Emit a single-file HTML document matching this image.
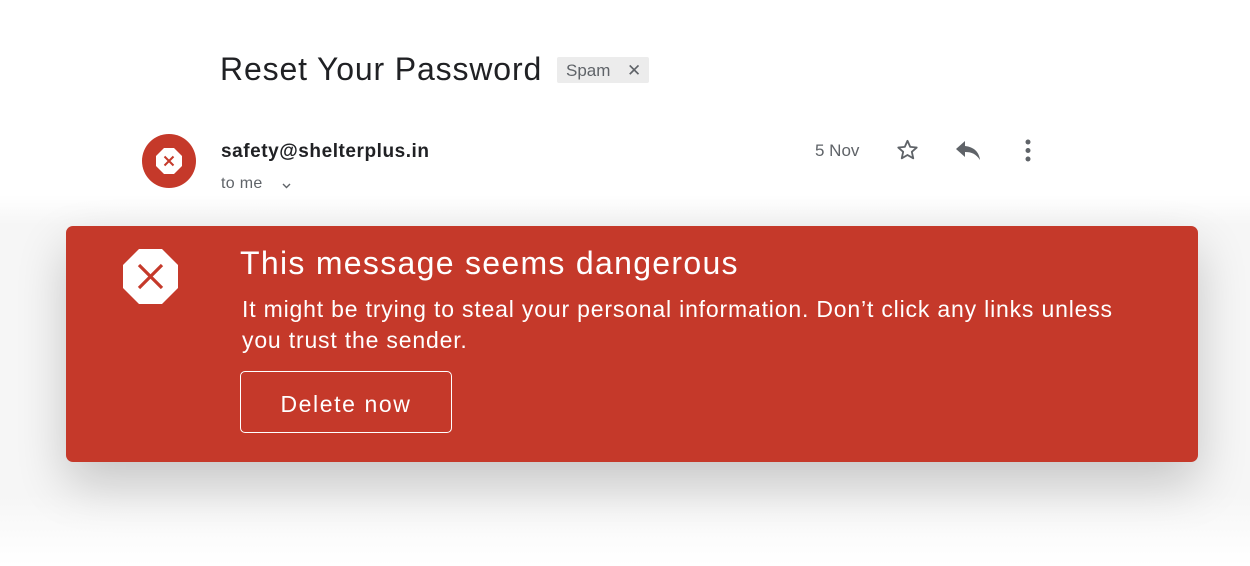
<!DOCTYPE html>
<html><head><meta charset="utf-8"><style>
html,body{margin:0;padding:0;background:#fff;width:1250px;height:566px;overflow:hidden;position:relative;font-family:"Liberation Sans",sans-serif;}
.a{position:absolute;}
.fade{left:0;top:195px;width:1250px;height:371px;background:linear-gradient(#fff,#f6f6f6 30px,#f6f6f6 300px,#fff);}
.title{left:220px;top:51px;font-size:32px;color:#202124;letter-spacing:0.85px;}
.spam{left:557px;top:57px;width:92px;height:26px;background:#ececec;border-radius:2px;font-size:17px;color:#5f6368;line-height:27px;}
.banner{left:66px;top:226px;width:1132px;height:236px;background:#c5392a;border-radius:7px;box-shadow:0 22px 50px rgba(0,0,0,0.2);}
</style></head><body>
<div class="a fade"></div>
<div class="a title">Reset Your Password</div>
<div class="a spam"><span style="position:absolute;left:9px">Spam</span><span style="position:absolute;left:70px;font-size:17px">✕</span></div>
<svg class="a" style="left:142px;top:134px" width="54" height="54" viewBox="0 0 54 54">
<circle cx="27" cy="27" r="27" fill="#c5392a"/>
<polygon points="22,14 32,14 40,22 40,32 32,40 22,40 14,32 14,22" fill="#fff"/>
<path d="M22.5 22.5L31.5 31.5M31.5 22.5L22.5 31.5" stroke="#c5392a" stroke-width="2"/>
</svg>
<div class="a" style="left:221px;top:141px;font-size:19px;font-weight:bold;color:#202124;letter-spacing:0.55px">safety@shelterplus.in</div>
<div class="a" style="left:221px;top:175px;font-size:16px;color:#5f6368;letter-spacing:0.3px">to me</div>
<svg class="a" style="left:281px;top:182px" width="11" height="8" viewBox="0 0 11 8"><path d="M2 2l3.5 3.5L9 2" stroke="#5f6368" stroke-width="1.4" fill="none"/></svg>
<div class="a" style="left:815px;top:141px;font-size:17px;color:#5f6368">5 Nov</div>
<svg class="a" style="left:894px;top:137px" width="27" height="26" viewBox="0 0 24 24"><path d="M12 3.5l2.5 5.6 6 .6-4.5 4 1.3 6-5.3-3.1-5.3 3.1 1.3-6-4.5-4 6-.6z" fill="none" stroke="#5f6368" stroke-width="1.7" stroke-linejoin="round"/></svg>
<svg class="a" style="left:954px;top:138px" width="28" height="24" viewBox="0 0 28 24"><path d="M11 3L2 11l9 8v-5c7 0 11 2 15 8-1-8-6-13-15-14z" fill="#5f6368"/></svg>
<svg class="a" style="left:1024px;top:138px" width="8" height="25" viewBox="0 0 8 25"><circle cx="4" cy="4" r="2.5" fill="#5f6368"/><circle cx="4" cy="12.5" r="2.5" fill="#5f6368"/><circle cx="4" cy="21" r="2.5" fill="#5f6368"/></svg>
<div class="a banner"></div>
<svg class="a" style="left:123px;top:249px" width="55" height="55" viewBox="0 0 55 55">
<polygon points="16,0 39,0 55,16 55,39 39,55 16,55 0,39 0,16" fill="#fff"/>
<path d="M16 16L39 39M39 16L16 39" stroke="#c5392a" stroke-width="3.2"/>
</svg>
<div class="a" style="left:240px;top:245px;font-size:32px;color:#fff;letter-spacing:1.3px;white-space:nowrap">This message seems dangerous</div>
<div class="a" style="left:242px;top:294px;font-size:23px;line-height:31px;color:#fff;letter-spacing:0.82px;white-space:nowrap">It might be trying to steal your personal information. Don’t click any links unless<br>you trust the sender.</div>
<div class="a" style="left:240px;top:371px;width:212px;height:62px;border:1.5px solid #fff;border-radius:5px;box-sizing:border-box;color:#fff;font-size:23px;line-height:64px;text-align:center;letter-spacing:1.6px">Delete now</div>
</body></html>
